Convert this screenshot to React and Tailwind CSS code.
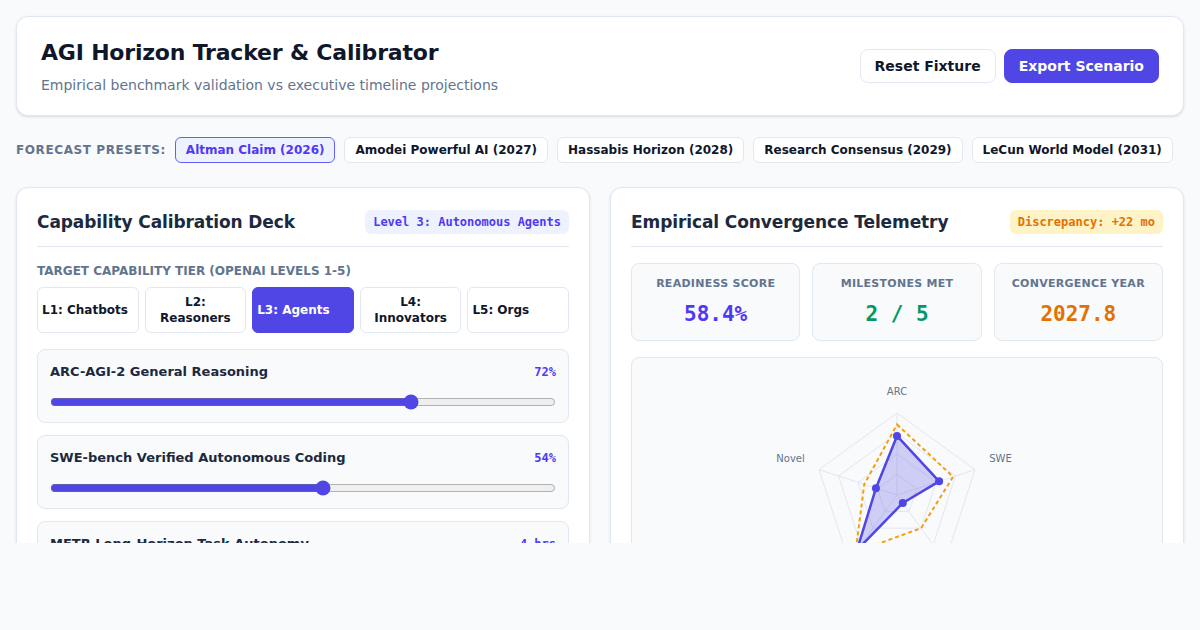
import React, { useState } from 'react';

const presets = [
  'Altman Claim (2026)',
  'Amodei Powerful AI (2027)',
  'Hassabis Horizon (2028)',
  'Research Consensus (2029)',
  'LeCun World Model (2031)',
];

const tiers = ['L1: Chatbots', 'L2: Reasoners', 'L3: Agents', 'L4: Innovators', 'L5: Orgs'];

const axes = [
  { label: 'ARC', v: 0.72, t: 0.86 },
  { label: 'SWE', v: 0.54, t: 0.72 },
  { label: 'METR', v: 0.12, t: 0.5 },
  { label: 'Agency', v: 0.83, t: 0.86 },
  { label: 'Novel', v: 0.27, t: 0.42 },
];

const Radar = () => {
  const cx = 150;
  const cy = 120;
  const R = 82;
  const pt = (i, r) => {
    const a = ((-90 + 72 * i) * Math.PI) / 180;
    return [cx + Math.cos(a) * r, cy + Math.sin(a) * r];
  };
  const poly = (fn) => axes.map((ax, i) => pt(i, fn(ax)).join(',')).join(' ');

  return (
    <svg width="300" height="260" viewBox="0 0 300 260" className="mx-auto block">
      {[0.25, 0.5, 0.75, 1].map((f) => (
        <polygon key={f} points={poly(() => R * f)} fill="none" stroke="#e2e8f0" strokeWidth="1" />
      ))}
      {axes.map((ax, i) => {
        const [x, y] = pt(i, R);
        return <line key={ax.label} x1={cx} y1={cy} x2={x} y2={y} stroke="#e2e8f0" strokeWidth="1" />;
      })}
      <polygon points={poly((ax) => ax.t * R)} fill="none" stroke="#f59e0b" strokeWidth="2" strokeDasharray="4 3" />
      <polygon points={poly((ax) => ax.v * R)} fill="rgba(79,70,229,0.25)" stroke="#4f46e5" strokeWidth="2.5" strokeLinejoin="round" />
      {axes.map((ax, i) => {
        const [x, y] = pt(i, ax.v * R);
        return <circle key={ax.label} cx={x} cy={y} r="4" fill="#4f46e5" />;
      })}
      {axes.map((ax, i) => {
        const a = ((-90 + 72 * i) * Math.PI) / 180;
        const [x, y] = pt(i, 97);
        const c = Math.cos(a);
        const anchor = c > 0.1 ? 'start' : c < -0.1 ? 'end' : 'middle';
        return (
          <text key={ax.label} x={x} y={Math.sin(a) > 0.5 ? y + 12 : y - 3} textAnchor={anchor} fontSize="10" fill="#64748b" fontFamily="DejaVu Sans, sans-serif">
            {ax.label}
          </text>
        );
      })}
    </svg>
  );
};

const SliderCard = ({ label, display, value, onChange }) => (
  <div className="rounded-lg border border-slate-200 bg-slate-50 p-3">
    <div className="flex items-center justify-between">
      <span className="text-[13px] leading-5 font-bold text-slate-800">{label}</span>
      <span className="font-['DejaVu_Sans_Mono'] text-xs font-bold text-indigo-600">{display}</span>
    </div>
    <input
      type="range"
      min="0"
      max="100"
      value={value}
      onChange={(e) => onChange(Number(e.target.value))}
      className="mt-3 block w-full accent-[#4f46e5]"
    />
  </div>
);

const App = () => {
  const [preset, setPreset] = useState(0);
  const [tier, setTier] = useState(2);
  const [arc, setArc] = useState(72);
  const [swe, setSwe] = useState(54);
  const [metr, setMetr] = useState(12);

  return (
    <div className="min-h-screen bg-[#f8fafc] font-['DejaVu_Sans',sans-serif] text-slate-900">
      <div className="h-[543px] overflow-hidden p-4">
        {/* Header */}
        <header className="flex items-center justify-between rounded-xl border border-slate-200 bg-white px-6 py-5 shadow-sm">
          <div>
            <h1 className="text-[22px] leading-8 font-bold tracking-[-0.2px] text-slate-900">AGI Horizon Tracker &amp; Calibrator</h1>
            <p className="mt-1.5 text-sm text-slate-500">Empirical benchmark validation vs executive timeline projections</p>
          </div>
          <div className="flex items-center gap-2">
            <button className="rounded-lg border border-slate-200 bg-white px-3.5 py-1.5 text-sm font-bold text-slate-900">
              Reset Fixture
            </button>
            <button className="rounded-lg border border-[#4f46e5] bg-[#4f46e5] px-3.5 py-1.5 text-sm font-bold text-white">
              Export Scenario
            </button>
          </div>
        </header>

        {/* Presets */}
        <div className="mt-[21px] flex items-center gap-[9px]">
          <span className="text-xs font-bold tracking-wider text-slate-500">FORECAST PRESETS:</span>
          {presets.map((p, i) => (
            <button
              key={p}
              onClick={() => setPreset(i)}
              className={`rounded-md border px-2.5 py-1 text-xs font-bold ${
                preset === i ? 'border-indigo-500 bg-indigo-50 text-indigo-600' : 'border-slate-200 bg-white text-slate-900'
              }`}
            >
              {p}
            </button>
          ))}
        </div>

        <div className="mt-6 grid grid-cols-2 gap-5">
          {/* Left panel */}
          <section className="rounded-xl border border-slate-200 bg-white px-5 pt-5 pb-5 shadow-sm">
            <div className="flex items-center justify-between border-b border-slate-200 pb-2.5">
              <h2 className="text-[17px] leading-7 font-bold tracking-[-0.1px] text-slate-800">Capability Calibration Deck</h2>
              <span className="rounded-md bg-indigo-50 px-2 py-1 font-['DejaVu_Sans_Mono'] text-xs font-bold text-indigo-600">
                Level 3: Autonomous Agents
              </span>
            </div>

            <div className="mt-4 text-xs font-bold text-slate-500">TARGET CAPABILITY TIER (OPENAI LEVELS 1-5)</div>
            <div className="mt-2 grid grid-cols-5 gap-1.5">
              {tiers.map((t, i) => (
                <button
                  key={t}
                  onClick={() => setTier(i)}
                  className={`flex items-center rounded-md border px-1 py-1.5 text-xs leading-4 font-bold ${
                    tier === i ? 'border-[#4f46e5] bg-[#4f46e5] text-white' : 'border-slate-200 bg-white text-slate-900'
                  }`}
                >
                  {t}
                </button>
              ))}
            </div>

            <div className="mt-4 space-y-3">
              <SliderCard label="ARC-AGI-2 General Reasoning" display={`${arc}%`} value={arc} onChange={setArc} />
              <SliderCard label="SWE-bench Verified Autonomous Coding" display={`${swe}%`} value={swe} onChange={setSwe} />
              <SliderCard label="METR Long-Horizon Task Autonomy" display="4 hrs" value={metr} onChange={setMetr} />
            </div>
          </section>

          {/* Right panel */}
          <section className="rounded-xl border border-slate-200 bg-white px-5 pt-5 pb-5 shadow-sm">
            <div className="flex items-center justify-between border-b border-slate-200 pb-2.5">
              <h2 className="text-[17px] leading-7 font-bold tracking-[-0.1px] text-slate-800">Empirical Convergence Telemetry</h2>
              <span className="rounded-md bg-amber-100 px-2 py-1 font-['DejaVu_Sans_Mono'] text-xs font-bold text-amber-600">
                Discrepancy: +22 mo
              </span>
            </div>

            <div className="mt-4 grid grid-cols-3 gap-3">
              {[
                { k: 'READINESS SCORE', v: '58.4%', c: 'text-indigo-600' },
                { k: 'MILESTONES MET', v: '2 / 5', c: 'text-emerald-600' },
                { k: 'CONVERGENCE YEAR', v: '2027.8', c: 'text-amber-600' },
              ].map((s) => (
                <div key={s.k} className="rounded-lg border border-slate-200 bg-slate-50 p-3 text-center">
                  <div className="text-[11px] leading-4 font-bold tracking-wide text-slate-500">{s.k}</div>
                  <div className={`mt-2 font-['DejaVu_Sans_Mono'] text-[21px] leading-7 font-bold ${s.c}`}>{s.v}</div>
                </div>
              ))}
            </div>

            <div className="mt-4 rounded-lg border border-slate-200 bg-slate-50 pt-[17px] pb-4">
              <Radar />
            </div>
          </section>
        </div>
      </div>
    </div>
  );
};

export default App;
